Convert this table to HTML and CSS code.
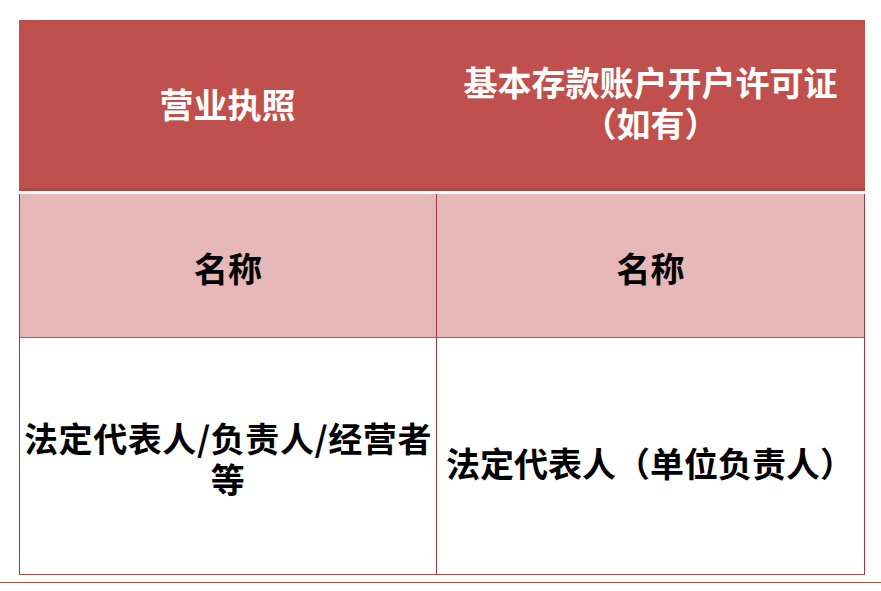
FILE: index.html
```html
<!DOCTYPE html>
<html lang="zh-CN">
<head>
<meta charset="utf-8">
<title>营业执照</title>
<link rel="stylesheet" href="styles.css">
</head>
<body>
<div class="page">
  <div class="table">
    <div class="cell hd">营业执照</div>
    <div class="cell hd hd-r">基本存款账户开户许可证<br>（如有）</div>
    <div class="cell nm nm-l">名称</div>
    <div class="cell nm nm-r">名称</div>
    <div class="cell bd bd-l">法定代表人/负责人/经营者<br>等</div>
    <div class="cell bd bd-r">法定代表人（单位负责人）</div>
  </div>
  <div class="rule"></div>
</div>
</body>
</html>
```
FILE: styles.css
```css
html, body {
  margin: 0;
  padding: 0;
  background: #ffffff;
}
.page {
  width: 881px;
  height: 591px;
  padding-top: 20px;
  box-sizing: border-box;
  font-family: "Noto Sans CJK SC", "Liberation Sans", sans-serif;
}
.table {
  margin-left: 19px;
  width: 846px;
  display: grid;
  grid-template-columns: 417px 429px;
}
.cell {
  display: flex;
  align-items: center;
  justify-content: center;
  text-align: center;
  font-size: 34px;
  line-height: 41px;
  box-sizing: border-box;
  white-space: nowrap;
}
.hd {
  background: #c0504d;
  height: 171px;
  border-bottom: 3px solid #b24845;
  margin-bottom: 3px;
  color: #ffffff;
  font-weight: 700;
  padding-bottom: 2px;
}
.hd-r {
  padding-bottom: 4px;
}
.nm {
  background: #e6b8b7;
  height: 144px;
  border-left: 1px solid #9b3b3f;
  border-bottom: 1px solid #c84e4e;
  color: #000000;
  font-weight: 700;
  padding-top: 4px;
}
.nm-r, .bd-r {
  border-right: 1px solid #9b3b3f;
}
.bd {
  background: #ffffff;
  height: 237px;
  border-left: 1px solid #9b3b3f;
  border-bottom: 1px solid #b54a4a;
  color: #000000;
  font-weight: 700;
  padding-top: 4px;
}
.bd-l {
  padding-left: 0;
  padding-right: 0;
  letter-spacing: 0.6px;
}
.bd-r {
  justify-content: flex-start;
  padding-left: 9px;
  padding-top: 12px;
}
.rule {
  margin-top: 7px;
  height: 1px;
  border-top: 1px solid #b5502e;
  width: 881px;
}
```
